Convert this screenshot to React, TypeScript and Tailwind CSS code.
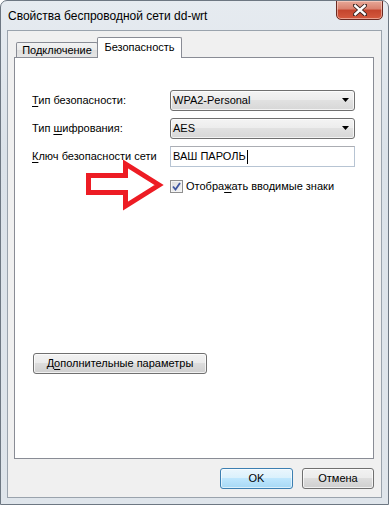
import React from "react";

const btn =
  "flex items-center justify-center h-[21px] rounded-[3px] border border-[#707070] bg-[linear-gradient(#f2f2f2,#ebebeb_50%,#dddddd_50%,#cfcfcf)] text-[11px] text-black shadow-[inset_0_0_0_1px_rgba(255,255,255,0.7)]";

function Select({ value }: { value: string }) {
  return (
    <div className="flex items-center justify-between w-[185px] h-[21px] rounded-[3px] border border-[#707070] bg-[linear-gradient(#f4f4f4,#ececec_50%,#e1e1e1_50%,#d7d7d7)] shadow-[inset_0_0_0_1px_rgba(255,255,255,0.7)] pl-[2px] pr-[4px]">
      <span className="text-[11px] text-black">{value}</span>
      <svg width="8" height="5" viewBox="0 0 8 5">
        <path d="M0 0 H7 L3.5 4 Z" fill="#000" />
      </svg>
    </div>
  );
}

export default function App() {
  return (
    <div className="relative w-[389px] h-[505px] flex flex-col rounded-t-[7px] border border-[#6d7782] bg-[linear-gradient(#e6ebf0,#dbe2e9_30%,#dfe5eb)] font-['Liberation_Sans',Arial,sans-serif] text-black overflow-hidden">
      {/* Title bar */}
      <div className="h-[29px] flex items-start justify-between shrink-0">
        <span className="pl-[7px] pt-[8px] text-[12px] leading-[15px]">
          Свойства беспроводной сети dd-wrt
        </span>
        <div className="-mt-[1px] mr-[5px] w-[47px] h-[20px] rounded-b-[5px] border border-[#6b2a22] bg-[linear-gradient(#e7a898,#d9806d_45%,#c4442d_50%,#d55a3f)] shadow-[inset_0_0_0_1px_rgba(255,220,210,0.55)] flex items-center justify-center">
          <svg width="14" height="12" viewBox="0 0 14 12">
            <path d="M2 1.5 L12 10.5 M12 1.5 L2 10.5" stroke="#3a2420" strokeWidth="4.2" strokeLinecap="square" />
            <path d="M2.3 1.8 L11.7 10.2 M11.7 1.8 L2.3 10.2" stroke="#ffffff" strokeWidth="2.4" strokeLinecap="square" />
          </svg>
        </div>
      </div>

      {/* Content */}
      <div className="mx-[6px] mb-[6px] flex-1 flex flex-col bg-[#f0f0f0] border border-[#9aa3ad] pl-[6px] pr-[7px] pt-[6px]">
        {/* Tabs */}
        <div className="flex items-end h-[20px] pl-[2px] relative z-10">
          <div className="w-[82px] h-[15px] border border-b-0 border-[#898c95] rounded-t-[2px] bg-[linear-gradient(#f3f3f3,#ebebeb_50%,#dedede_50%,#e6e6e6)] flex items-center justify-center text-[11px] leading-[13px]">
            Подключение
          </div>
          <div className="-ml-[1px] w-[85px] h-[21px] -mb-[1px] border border-b-0 border-[#898c95] rounded-t-[2px] bg-white flex items-start justify-center pt-[3px] text-[11px] leading-[13px]">
            Безопасность
          </div>
        </div>

        {/* Panel */}
        <div className="h-[402px] bg-white border border-[#898c95] pl-[17px] pt-[32px] flex flex-col">
          <div className="flex items-center h-[21px]">
            <span className="w-[138px] text-[11px]">
              <span className="underline underline-offset-2">Т</span>ип безопасности:
            </span>
            <Select value="WPA2-Personal" />
          </div>
          <div className="flex items-center h-[21px] mt-[7px]">
            <span className="w-[138px] text-[11px]">
              Тип <span className="underline underline-offset-2">ш</span>ифрования:
            </span>
            <Select value="AES" />
          </div>
          <div className="flex items-center h-[21px] mt-[7px]">
            <span className="w-[138px] text-[11px]">
              <span className="underline underline-offset-2">К</span>люч безопасности сети
            </span>
            <div className="w-[185px] h-[21px] border border-[#b7c4d3] border-t-[#abadb3] bg-white flex items-center pl-[2px]">
              <span className="text-[11px]">ВАШ ПАРОЛЬ</span>
              <span className="ml-[1px] w-[1px] h-[14px] bg-black" />
            </div>
          </div>
          <div className="flex items-center h-[13px] mt-[13px] pl-[138px]">
            <div className="w-[13px] h-[13px] border border-[#8f8f8f] bg-[linear-gradient(135deg,#dcdcdc,#f5f5f5)] flex items-center justify-center shadow-[inset_0_0_0_1px_#f4f4f4]">
              <svg width="9" height="9" viewBox="0 0 9 9">
                <path d="M1 4.5 L3.5 7.5 L8 1" stroke="#3f56a0" strokeWidth="1.8" fill="none" />
              </svg>
            </div>
            <span className="ml-[3px] text-[11px]">
              Отобра<span className="underline underline-offset-2">ж</span>ать вводимые знаки
            </span>
          </div>
          <div className="mt-[160px] ml-[1px]">
            <div className={`${btn} w-[174px]`}>
              Д<span className="underline underline-offset-2">о</span>полнительные параметры
            </div>
          </div>
        </div>

        {/* Bottom buttons */}
        <div className="flex justify-end gap-[9px] mt-[9px]">
          <div className="flex items-center justify-center w-[73px] h-[21px] rounded-[3px] border border-[#3c7fb1] bg-[linear-gradient(#eaf6fd,#d9f0fc_50%,#bee6fd_50%,#a7d9f5)] shadow-[inset_0_0_0_1px_rgba(255,255,255,0.6)] text-[11px]">
            OK
          </div>
          <div className={`${btn} w-[72px]`}>Отмена</div>
        </div>
      </div>

      {/* Red arrow annotation */}
      <svg
        className="absolute left-[-1px] top-[-1px] pointer-events-none"
        width="389"
        height="505"
        viewBox="0 0 389 505"
      >
        <path
          d="M88.5 175.5 H125.5 V164 L159 185 L125.5 206 V192.5 H88.5 Z"
          fill="none"
          stroke="#ed1c24"
          strokeWidth="5"
          strokeLinejoin="miter"
        />
      </svg>
    </div>
  );
}
